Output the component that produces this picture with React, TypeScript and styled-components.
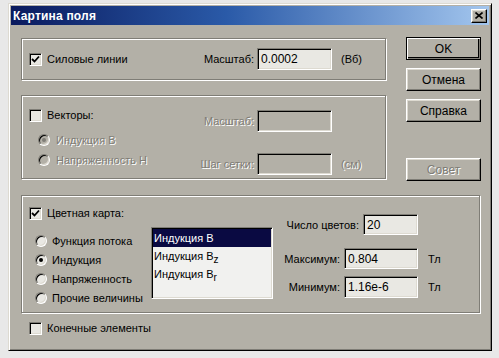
import React from 'react';
import styled, { createGlobalStyle, css } from 'styled-components';

const FACE = '#b3b0a7';
const SHADOW = '#7f7d76';
const LIGHT = '#dddad1';
const FIELD = '#e9e8e3';

const GlobalStyle = createGlobalStyle`
   html, body {
      margin: 0;
      padding: 0;
      background: #e8e8e8;
   }
   body {
      font-family: 'Liberation Sans', Arial, sans-serif;
      font-size: 11px;
      color: #000;
   }
`;

const Window = styled.div`
   box-sizing: border-box;
   width: 484px;
   height: 348px;
   margin: 3px 0 0 8px;
   padding: 2px;
   background: ${FACE};
   border: 1px solid;
   border-color: ${LIGHT} #000 #000 ${LIGHT};
   box-shadow: inset 1px 1px #fff, inset -1px -1px ${SHADOW};
   display: flex;
   flex-direction: column;
`;

const TitleBar = styled.div`
   height: 19px;
   display: flex;
   align-items: center;
   justify-content: space-between;
   padding: 0 2px 0 2px;
   background: linear-gradient(to right, #0a1a5e 0%, #2a5aa8 45%, #a3c6ee 100%);
`;

const Title = styled.span`
   color: #fff;
   font-weight: bold;
   font-size: 12px;
   letter-spacing: 0.2px;
`;

const raised = css`
   background: ${FACE};
   border: 1px solid;
   border-color: #fff #000 #000 #fff;
   box-shadow: inset -1px -1px ${SHADOW}, inset 1px 1px ${LIGHT};
`;

const CloseButton = styled.div`
   ${raised};
   box-sizing: border-box;
   width: 16px;
   height: 14px;
   display: flex;
   align-items: center;
   justify-content: center;
`;

const Body = styled.div`
   padding: 13px 8px 0 10px;
   display: flex;
   flex-direction: column;
`;

const TopSection = styled.div`
   display: flex;
   align-items: flex-start;
`;

const GroupColumn = styled.div`
   width: 365px;
   display: flex;
   flex-direction: column;
   gap: 15px;
`;

const ButtonColumn = styled.div`
   margin-left: auto;
   margin-top: -1px;
   display: flex;
   flex-direction: column;
   gap: 8px;
`;

const Button = styled.div<{ $default?: boolean; $disabled?: boolean; $gap?: number }>`
   ${raised};
   box-sizing: border-box;
   width: 75px;
   height: 23px;
   font-size: 12px;
   display: flex;
   align-items: center;
   justify-content: center;
   margin-top: ${({ $gap }) => $gap ?? 0}px;
   color: ${({ $disabled }) => ($disabled ? SHADOW : '#000')};
   text-shadow: ${({ $disabled }) => ($disabled ? '1px 1px #fff' : 'none')};
   ${({ $default }) =>
      $default &&
      css`
         border: 1px solid #000;
         box-shadow: inset 1px 1px #fff, inset -1px -1px ${SHADOW}, inset -2px -2px #000;
      `}
`;

const GroupBox = styled.div<{ $height: number; $width?: number }>`
   box-sizing: border-box;
   height: ${({ $height }) => $height}px;
   width: ${({ $width }) => ($width ? `${$width}px` : 'auto')};
   border: 1px solid ${SHADOW};
   box-shadow: inset 1px 1px #fff, 1px 1px #fff;
`;

const LineGroup = styled(GroupBox)`
   display: flex;
   align-items: center;
   padding: 0 8px 0 7px;
`;

const VectorGroup = styled(GroupBox)`
   display: flex;
   padding: 11px 8px 0 7px;
`;

const ColorGroup = styled(GroupBox)`
   margin-top: 14px;
   display: flex;
   padding: 10px 11px 0 7px;
`;

const Col = styled.div<{ $pad?: number }>`
   display: flex;
   flex-direction: column;
   padding-top: ${({ $pad }) => $pad ?? 0}px;
`;

const Label = styled.span<{ $disabled?: boolean }>`
   white-space: nowrap;
   color: ${({ $disabled }) => ($disabled ? SHADOW : '#000')};
   text-shadow: ${({ $disabled }) => ($disabled ? '1px 1px #fff' : 'none')};
`;

const CheckRow = styled.label`
   display: flex;
   align-items: center;
   gap: 5px;
   height: 14px;
`;

const CheckBox = styled.span`
   box-sizing: border-box;
   width: 13px;
   height: 13px;
   background: ${FIELD};
   border: 1px solid;
   border-color: ${SHADOW} #fff #fff ${SHADOW};
   box-shadow: inset 1px 1px #000, inset -1px -1px ${LIGHT};
   display: flex;
   align-items: center;
   justify-content: center;
`;

const RadioList = styled.div<{ $left: number; $top?: number; $width?: number; $row: number }>`
   display: flex;
   flex-direction: column;
   margin-left: ${({ $left }) => $left}px;
   padding-top: ${({ $top }) => $top ?? 0}px;
   width: ${({ $width }) => ($width ? `${$width}px` : 'auto')};
   & > * {
      height: ${({ $row }) => $row}px;
   }
`;

const RadioRow = styled.label<{ $gap: number }>`
   display: flex;
   align-items: center;
   gap: ${({ $gap }) => $gap}px;
`;

const RadioCircle = styled.span<{ $disabled?: boolean; $on?: boolean }>`
   box-sizing: border-box;
   width: 12px;
   height: 12px;
   border-radius: 50%;
   border: 1px solid;
   border-color: ${SHADOW} #fff #fff ${SHADOW};
   box-shadow: inset 1px 1px #000, inset -1px -1px ${LIGHT};
   background: ${({ $disabled }) => ($disabled ? FACE : FIELD)};
   display: flex;
   align-items: center;
   justify-content: center;
   &::after {
      content: '';
      display: ${({ $on }) => ($on ? 'block' : 'none')};
      width: 4px;
      height: 4px;
      border-radius: 50%;
      background: ${({ $disabled }) => ($disabled ? SHADOW : '#000')};
   }
`;

const Field = styled.div<{ $width: number; $height?: number; $disabled?: boolean }>`
   box-sizing: border-box;
   width: ${({ $width }) => $width}px;
   height: ${({ $height }) => $height ?? 22}px;
   padding: 0 3px;
   font-size: 12px;
   display: flex;
   align-items: center;
   background: ${({ $disabled }) => ($disabled ? FACE : FIELD)};
   border: 1px solid;
   border-color: ${SHADOW} #fff #fff ${SHADOW};
   box-shadow: inset 1px 1px #000, inset -1px -1px ${LIGHT};
`;

const Spacer = styled.div`
   flex: 1;
`;

const Unit = styled.span<{ $width: number; $left: number; $disabled?: boolean }>`
   width: ${({ $width }) => $width}px;
   padding-left: ${({ $left }) => $left}px;
   color: ${({ $disabled }) => ($disabled ? SHADOW : '#000')};
   text-shadow: ${({ $disabled }) => ($disabled ? '1px 1px #fff' : 'none')};
`;

const FieldGrid = styled.div`
   margin-left: auto;
   display: grid;
   grid-template-columns: auto auto auto;
   row-gap: 16px;
   align-items: center;
   justify-items: end;
   & > ${Unit} {
      justify-self: start;
   }
`;

const FieldRow = styled.div<{ $top: number }>`
   display: flex;
   align-items: center;
   justify-content: flex-end;
   gap: 4px;
   margin-top: ${({ $top }) => $top}px;
`;

const ListRow = styled.div`
   display: flex;
   margin-top: 7px;
`;

const ListBox = styled.div`
   box-sizing: border-box;
   width: 122px;
   height: 72px;
   padding: 1px;
   background: #f1f1ef;
   border: 1px solid;
   border-color: ${SHADOW} #fff #fff ${SHADOW};
   box-shadow: inset 1px 1px #000, inset -1px -1px ${LIGHT};
`;

const ListItem = styled.div<{ $selected?: boolean }>`
   height: 18px;
   padding-left: 1px;
   display: flex;
   align-items: center;
   white-space: nowrap;
   background: ${({ $selected }) => ($selected ? '#0a0a42' : 'transparent')};
   color: ${({ $selected }) => ($selected ? '#fff' : '#000')};
`;

const Sub = styled.span`
   font-size: 10px;
   position: relative;
   top: 3px;
`;

const BottomRow = styled.div`
   margin-top: 8px;
   padding-left: 8px;
`;

const Check = () => (
   <svg width="9" height="9" viewBox="0 0 9 9">
      <path d="M1 4 L3.5 6.5 L8 1.5" fill="none" stroke="#000" strokeWidth="1.8" />
   </svg>
);

const Checkbox = ({ label, checked }: { label: string; checked?: boolean }) => (
   <CheckRow>
      <CheckBox>{checked && <Check />}</CheckBox>
      <Label>{label}</Label>
   </CheckRow>
);

const Radio = ({
   label,
   on,
   disabled,
   gap,
}: {
   label: string;
   on?: boolean;
   disabled?: boolean;
   gap: number;
}) => (
   <RadioRow $gap={gap}>
      <RadioCircle $on={on} $disabled={disabled} />
      <Label $disabled={disabled}>{label}</Label>
   </RadioRow>
);

const App = () => {
   return (
      <>
         <GlobalStyle />
         <Window>
            <TitleBar>
               <Title>Картина поля</Title>
               <CloseButton>
                  <svg width="8" height="7" viewBox="0 0 8 7">
                     <path d="M0.5 0.5 L7.5 6.5 M7.5 0.5 L0.5 6.5" stroke="#000" strokeWidth="1.6" />
                  </svg>
               </CloseButton>
            </TitleBar>
            <Body>
               <TopSection>
                  <GroupColumn>
                     <LineGroup $height={42}>
                        <Checkbox label="Силовые линии" checked />
                        <Spacer />
                        <Label>Масштаб:</Label>
                        <Field $width={75} style={{ marginLeft: 3 }}>
                           0.0002
                        </Field>
                        <Unit $width={36} $left={9}>
                           (Вб)
                        </Unit>
                     </LineGroup>
                     <VectorGroup $height={84}>
                        <Col $pad={1}>
                           <Checkbox label="Векторы:" />
                           <RadioList $left={9} $top={8} $row={20}>
                              <Radio label="Индукция B" on disabled gap={6} />
                              <Radio label="Напряженность H" disabled gap={6} />
                           </RadioList>
                        </Col>
                        <FieldGrid>
                           <Label $disabled>Масштаб:</Label>
                           <Field $width={75} $disabled style={{ marginLeft: 3 }} />
                           <Unit $width={36} $left={9} />
                           <Label $disabled>Шаг сетки:</Label>
                           <Field $width={75} $disabled style={{ marginLeft: 3 }} />
                           <Unit $width={36} $left={9} $disabled>
                              (см)
                           </Unit>
                        </FieldGrid>
                     </VectorGroup>
                  </GroupColumn>
                  <ButtonColumn>
                     <Button $default>OK</Button>
                     <Button>Отмена</Button>
                     <Button>Справка</Button>
                     <Button $disabled $gap={28}>
                        Совет
                     </Button>
                  </ButtonColumn>
               </TopSection>
               <ColorGroup $height={118} $width={459}>
                  <Col>
                     <Checkbox label="Цветная карта:" checked />
                     <ListRow>
                        <RadioList $left={6} $top={4} $width={116} $row={19}>
                           <Radio label="Функция потока" gap={5} />
                           <Radio label="Индукция" on gap={5} />
                           <Radio label="Напряженность" gap={5} />
                           <Radio label="Прочие величины" gap={5} />
                        </RadioList>
                        <ListBox>
                           <ListItem $selected>Индукция B</ListItem>
                           <ListItem>
                              Индукция B<Sub>z</Sub>
                           </ListItem>
                           <ListItem>
                              Индукция B<Sub>r</Sub>
                           </ListItem>
                        </ListBox>
                     </ListRow>
                  </Col>
                  <Col style={{ marginLeft: 'auto' }}>
                     <FieldRow $top={8}>
                        <Label>Число цветов:</Label>
                        <Field $width={55} $height={21}>
                           20
                        </Field>
                        <Unit $width={40} $left={6} />
                     </FieldRow>
                     <FieldRow $top={13}>
                        <Label>Максимум:</Label>
                        <Field $width={74} $height={21}>
                           0.804
                        </Field>
                        <Unit $width={40} $left={6}>
                           Тл
                        </Unit>
                     </FieldRow>
                     <FieldRow $top={7}>
                        <Label>Минимум:</Label>
                        <Field $width={74} $height={22}>
                           1.16e-6
                        </Field>
                        <Unit $width={40} $left={6}>
                           Тл
                        </Unit>
                     </FieldRow>
                  </Col>
               </ColorGroup>
               <BottomRow>
                  <Checkbox label="Конечные элементы" />
               </BottomRow>
            </Body>
         </Window>
      </>
   );
};

export default App;
